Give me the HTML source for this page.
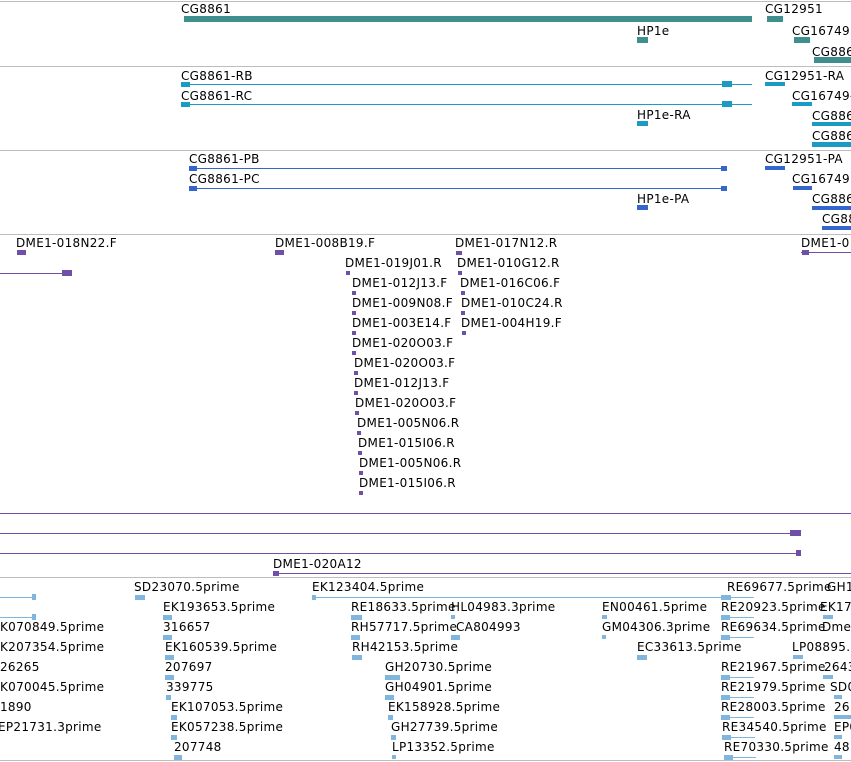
<!DOCTYPE html>
<html><head><meta charset="utf-8"><style>
body{margin:0;width:851px;height:762px;overflow:hidden;background:#fff;position:relative;font-family:"DejaVu Sans","Liberation Sans",sans-serif}
.t{position:absolute;font-size:12px;line-height:14px;white-space:nowrap;color:#000;letter-spacing:0.3px;margin-top:1px}
.s{position:absolute;left:0;width:851px;height:1px;background:#bdbdbd}
.b{position:absolute}
.tl{background:#3f8f8f}.cy{background:#1a9bc3}.bl{background:#3466cc}.pu{background:#6e50a8}.lb{background:#80b6dd}
</style></head><body>
<div class="s" style="top:1px"></div>
<div class="s" style="top:66px"></div>
<div class="s" style="top:150px"></div>
<div class="s" style="top:234px"></div>
<div class="s" style="top:577px"></div>
<div class="s" style="top:760px"></div>

<!-- teal genes -->
<div class="t" style="left:181px;top:1px">CG8861</div>
<div class="b tl" style="left:184px;top:16px;width:568px;height:6px"></div>
<div class="t" style="left:765px;top:1px">CG12951</div>
<div class="b tl" style="left:767px;top:16px;width:16px;height:6px"></div>
<div class="t" style="left:637px;top:23px">HP1e</div>
<div class="b tl" style="left:637px;top:37px;width:11px;height:6px"></div>
<div class="t" style="left:792px;top:23px">CG16749</div>
<div class="b tl" style="left:794px;top:37px;width:16px;height:6px"></div>
<div class="t" style="left:812px;top:44px">CG886</div>
<div class="b tl" style="left:814px;top:57px;width:37px;height:6px"></div>

<!-- cyan transcripts -->
<div class="t" style="left:181px;top:68px">CG8861-RB</div>
<div class="b cy" style="left:181px;top:84px;width:571px;height:1px"></div>
<div class="b cy" style="left:181px;top:82px;width:9px;height:5px"></div><div class="b cy" style="left:722px;top:81px;width:10px;height:6px"></div>
<div class="t" style="left:181px;top:88px">CG8861-RC</div>
<div class="b cy" style="left:181px;top:104px;width:571px;height:1px"></div>
<div class="b cy" style="left:181px;top:102px;width:9px;height:5px"></div><div class="b cy" style="left:722px;top:101px;width:10px;height:6px"></div>
<div class="t" style="left:765px;top:68px">CG12951-RA</div>
<div class="b cy" style="left:765px;top:82px;width:20px;height:4px"></div>
<div class="t" style="left:637px;top:107px">HP1e-RA</div>
<div class="b cy" style="left:637px;top:121px;width:11px;height:5px"></div>
<div class="t" style="left:792px;top:88px">CG16749-</div>
<div class="b cy" style="left:792px;top:102px;width:20px;height:4px"></div>
<div class="t" style="left:812px;top:108px">CG886</div>
<div class="b cy" style="left:812px;top:122px;width:39px;height:4px"></div>
<div class="t" style="left:812px;top:128px">CG886</div>
<div class="b cy" style="left:812px;top:142px;width:39px;height:5px"></div>

<!-- blue proteins -->
<div class="t" style="left:189px;top:151px">CG8861-PB</div>
<div class="b bl" style="left:189px;top:168px;width:538px;height:1px"></div>
<div class="b bl" style="left:189px;top:166px;width:8px;height:5px"></div><div class="b bl" style="left:721px;top:166px;width:6px;height:5px"></div>
<div class="t" style="left:189px;top:171px">CG8861-PC</div>
<div class="b bl" style="left:189px;top:188px;width:538px;height:1px"></div>
<div class="b bl" style="left:189px;top:186px;width:8px;height:5px"></div><div class="b bl" style="left:721px;top:186px;width:6px;height:5px"></div>
<div class="t" style="left:765px;top:151px">CG12951-PA</div>
<div class="b bl" style="left:765px;top:166px;width:20px;height:4px"></div>
<div class="t" style="left:637px;top:191px">HP1e-PA</div>
<div class="b bl" style="left:637px;top:205px;width:11px;height:5px"></div>
<div class="t" style="left:792px;top:171px">CG16749</div>
<div class="b bl" style="left:793px;top:186px;width:19px;height:4px"></div>
<div class="t" style="left:812px;top:191px">CG886</div>
<div class="b bl" style="left:812px;top:206px;width:39px;height:4px"></div>
<div class="t" style="left:822px;top:211px">CG88</div>
<div class="b bl" style="left:822px;top:226px;width:29px;height:4px"></div>

<!-- purple clones -->
<div class="t" style="left:16px;top:235px">DME1-018N22.F</div><div class="b pu" style="left:17px;top:250px;width:9px;height:5px"></div>
<div class="b pu" style="left:0;top:273px;width:70px;height:1px"></div><div class="b pu" style="left:62px;top:270px;width:10px;height:6px"></div>
<div class="t" style="left:275px;top:235px">DME1-008B19.F</div><div class="b pu" style="left:275px;top:250px;width:9px;height:5px"></div>
<div class="t" style="left:455px;top:235px">DME1-017N12.R</div><div class="b pu" style="left:456px;top:251px;width:6px;height:4px"></div>
<div class="t" style="left:345px;top:255px">DME1-019J01.R</div><div class="b pu" style="left:346px;top:271px;width:4px;height:4px"></div>
<div class="t" style="left:457px;top:255px">DME1-010G12.R</div><div class="b pu" style="left:458px;top:271px;width:4px;height:4px"></div>
<div class="t" style="left:352px;top:275px">DME1-012J13.F</div><div class="b pu" style="left:352px;top:291px;width:4px;height:4px"></div>
<div class="t" style="left:460px;top:275px">DME1-016C06.F</div><div class="b pu" style="left:461px;top:291px;width:4px;height:4px"></div>
<div class="t" style="left:352px;top:295px">DME1-009N08.F</div><div class="b pu" style="left:352px;top:311px;width:4px;height:4px"></div>
<div class="t" style="left:461px;top:295px">DME1-010C24.R</div><div class="b pu" style="left:461px;top:311px;width:4px;height:4px"></div>
<div class="t" style="left:352px;top:315px">DME1-003E14.F</div><div class="b pu" style="left:352px;top:331px;width:4px;height:4px"></div>
<div class="t" style="left:461px;top:315px">DME1-004H19.F</div><div class="b pu" style="left:462px;top:331px;width:4px;height:4px"></div>
<div class="t" style="left:352px;top:335px">DME1-020O03.F</div><div class="b pu" style="left:352px;top:351px;width:4px;height:4px"></div>
<div class="t" style="left:354px;top:355px">DME1-020O03.F</div><div class="b pu" style="left:354px;top:371px;width:4px;height:4px"></div>
<div class="t" style="left:354px;top:375px">DME1-012J13.F</div><div class="b pu" style="left:354px;top:391px;width:4px;height:4px"></div>
<div class="t" style="left:355px;top:395px">DME1-020O03.F</div><div class="b pu" style="left:355px;top:411px;width:4px;height:4px"></div>
<div class="t" style="left:357px;top:415px">DME1-005N06.R</div><div class="b pu" style="left:357px;top:431px;width:4px;height:4px"></div>
<div class="t" style="left:358px;top:435px">DME1-015I06.R</div><div class="b pu" style="left:358px;top:451px;width:4px;height:4px"></div>
<div class="t" style="left:359px;top:455px">DME1-005N06.R</div><div class="b pu" style="left:359px;top:471px;width:4px;height:4px"></div>
<div class="t" style="left:359px;top:475px">DME1-015I06.R</div><div class="b pu" style="left:359px;top:491px;width:4px;height:4px"></div>
<div class="t" style="left:801px;top:235px">DME1-0</div>
<div class="b pu" style="left:801px;top:252px;width:50px;height:1px"></div><div class="b pu" style="left:802px;top:250px;width:7px;height:5px"></div>
<div class="b pu" style="left:0;top:513px;width:851px;height:1px"></div>
<div class="b pu" style="left:0;top:533px;width:800px;height:1px"></div><div class="b pu" style="left:790px;top:530px;width:11px;height:6px"></div>
<div class="b pu" style="left:0;top:553px;width:801px;height:1px"></div><div class="b pu" style="left:796px;top:550px;width:5px;height:6px"></div>
<div class="t" style="left:273px;top:556px">DME1-020A12</div>
<div class="b pu" style="left:273px;top:573px;width:578px;height:1px"></div><div class="b pu" style="left:273px;top:571px;width:6px;height:5px"></div>

<!-- light blue ESTs -->
<div class="b lb" style="left:0;top:597px;width:36px;height:1px"></div><div class="b lb" style="left:32px;top:594px;width:4px;height:6px"></div>
<div class="b lb" style="left:0;top:617px;width:36px;height:1px"></div><div class="b lb" style="left:32px;top:614px;width:4px;height:6px"></div>
<div class="t" style="left:0;top:619px">K070849.5prime</div>
<div class="t" style="left:0;top:639px">K207354.5prime</div>
<div class="t" style="left:0;top:659px">26265</div>
<div class="t" style="left:0;top:679px">K070045.5prime</div>
<div class="t" style="left:0;top:699px">1890</div>
<div class="t" style="left:-2px;top:719px">EP21731.3prime</div>
<div class="t" style="left:134px;top:579px">SD23070.5prime</div><div class="b lb" style="left:135px;top:595px;width:10px;height:5px"></div>
<div class="t" style="left:163px;top:599px">EK193653.5prime</div><div class="b lb" style="left:163px;top:615px;width:9px;height:5px"></div>
<div class="t" style="left:163px;top:619px">316657</div><div class="b lb" style="left:163px;top:635px;width:9px;height:5px"></div>
<div class="t" style="left:165px;top:639px">EK160539.5prime</div><div class="b lb" style="left:165px;top:655px;width:9px;height:5px"></div>
<div class="t" style="left:165px;top:659px">207697</div><div class="b lb" style="left:165px;top:675px;width:9px;height:5px"></div>
<div class="t" style="left:166px;top:679px">339775</div><div class="b lb" style="left:166px;top:695px;width:5px;height:5px"></div>
<div class="t" style="left:171px;top:699px">EK107053.5prime</div><div class="b lb" style="left:171px;top:715px;width:6px;height:5px"></div>
<div class="t" style="left:171px;top:719px">EK057238.5prime</div><div class="b lb" style="left:171px;top:735px;width:6px;height:5px"></div>
<div class="t" style="left:174px;top:739px">207748</div><div class="b lb" style="left:174px;top:755px;width:8px;height:5px"></div>
<div class="t" style="left:312px;top:579px">EK123404.5prime</div>
<div class="b lb" style="left:312px;top:597px;width:418px;height:1px"></div><div class="b lb" style="left:312px;top:595px;width:4px;height:5px"></div>
<div class="t" style="left:727px;top:579px">RE69677.5prime</div><div class="t" style="left:827px;top:579px">GH1</div>
<div class="b lb" style="left:721px;top:597px;width:33px;height:1px"></div><div class="b lb" style="left:721px;top:595px;width:10px;height:5px"></div>
<div class="t" style="left:351px;top:599px">RE18633.5prime</div><div class="b lb" style="left:351px;top:615px;width:11px;height:5px"></div>
<div class="t" style="left:451px;top:599px">HL04983.3prime</div><div class="b lb" style="left:451px;top:615px;width:4px;height:4px"></div>
<div class="t" style="left:351px;top:619px">RH57717.5prime</div><div class="b lb" style="left:351px;top:635px;width:9px;height:5px"></div>
<div class="t" style="left:456px;top:619px">CA804993</div><div class="b lb" style="left:451px;top:635px;width:9px;height:5px"></div>
<div class="t" style="left:352px;top:639px">RH42153.5prime</div><div class="b lb" style="left:352px;top:655px;width:10px;height:5px"></div>
<div class="t" style="left:385px;top:659px">GH20730.5prime</div><div class="b lb" style="left:385px;top:675px;width:15px;height:5px"></div>
<div class="t" style="left:385px;top:679px">GH04901.5prime</div><div class="b lb" style="left:385px;top:695px;width:9px;height:5px"></div>
<div class="t" style="left:388px;top:699px">EK158928.5prime</div><div class="b lb" style="left:388px;top:715px;width:5px;height:5px"></div>
<div class="t" style="left:391px;top:719px">GH27739.5prime</div><div class="b lb" style="left:391px;top:735px;width:5px;height:5px"></div>
<div class="t" style="left:392px;top:739px">LP13352.5prime</div><div class="b lb" style="left:392px;top:755px;width:4px;height:4px"></div>
<div class="t" style="left:602px;top:599px">EN00461.5prime</div><div class="b lb" style="left:602px;top:615px;width:5px;height:4px"></div>
<div class="t" style="left:602px;top:619px">GM04306.3prime</div><div class="b lb" style="left:602px;top:635px;width:4px;height:4px"></div>
<div class="t" style="left:637px;top:639px">EC33613.5prime</div><div class="b lb" style="left:637px;top:655px;width:10px;height:5px"></div>
<div class="t" style="left:721px;top:599px">RE20923.5prime</div><div class="t" style="left:820px;top:599px">EK17</div>
<div class="b lb" style="left:721px;top:617px;width:33px;height:1px"></div><div class="b lb" style="left:721px;top:615px;width:9px;height:5px"></div>
<div class="t" style="left:721px;top:619px">RE69634.5prime</div><div class="t" style="left:822px;top:619px">Dme</div>
<div class="b lb" style="left:721px;top:637px;width:33px;height:1px"></div><div class="b lb" style="left:721px;top:635px;width:9px;height:5px"></div>
<div class="t" style="left:792px;top:639px">LP08895.5</div><div class="b lb" style="left:793px;top:655px;width:10px;height:4px"></div>
<div class="t" style="left:721px;top:659px">RE21967.5prime</div><div class="t" style="left:824px;top:659px">2643</div>
<div class="b lb" style="left:721px;top:677px;width:33px;height:1px"></div><div class="b lb" style="left:721px;top:675px;width:9px;height:5px"></div>
<div class="t" style="left:721px;top:679px">RE21979.5prime</div><div class="t" style="left:830px;top:679px">SD0</div>
<div class="b lb" style="left:721px;top:697px;width:33px;height:1px"></div><div class="b lb" style="left:721px;top:695px;width:9px;height:5px"></div>
<div class="t" style="left:721px;top:699px">RE28003.5prime</div><div class="t" style="left:834px;top:699px">26</div>
<div class="b lb" style="left:721px;top:717px;width:33px;height:1px"></div><div class="b lb" style="left:721px;top:715px;width:9px;height:5px"></div>
<div class="t" style="left:722px;top:719px">RE34540.5prime</div><div class="t" style="left:834px;top:719px">EP0</div>
<div class="b lb" style="left:722px;top:737px;width:33px;height:1px"></div><div class="b lb" style="left:722px;top:735px;width:9px;height:5px"></div>
<div class="t" style="left:724px;top:739px">RE70330.5prime</div><div class="t" style="left:834px;top:739px">48</div>
<div class="b lb" style="left:724px;top:757px;width:32px;height:1px"></div><div class="b lb" style="left:724px;top:755px;width:9px;height:5px"></div>
<div class="b lb" style="left:823px;top:615px;width:10px;height:4px"></div>
<div class="b lb" style="left:823px;top:675px;width:10px;height:4px"></div>
<div class="b lb" style="left:834px;top:695px;width:8px;height:4px"></div>
<div class="b lb" style="left:834px;top:715px;width:17px;height:4px"></div>
<div class="b lb" style="left:834px;top:735px;width:8px;height:4px"></div>
<div class="b lb" style="left:834px;top:755px;width:8px;height:4px"></div>
</body></html>
